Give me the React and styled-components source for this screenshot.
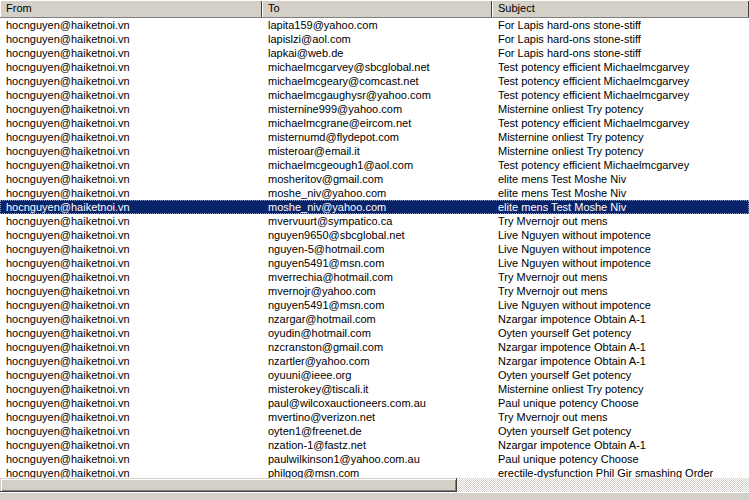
import React from "react";
import styled, { createGlobalStyle } from "styled-components";

const FACE = "#d4d0c8";
const SHADOW = "#808080";
const DARK = "#404040";
const SELECTED = "#0a246a";
const COLUMNS = "262px 230px 1fr";

const GlobalStyle = createGlobalStyle`
  html, body {
    margin: 0;
    padding: 0;
    background: ${FACE};
  }
`;

const FROM = "hocnguyen@haiketnoi.vn";

const MESSAGES = [
  ["lapita159@yahoo.com", "For Lapis hard-ons stone-stiff"],
  ["lapislzi@aol.com", "For Lapis hard-ons stone-stiff"],
  ["lapkai@web.de", "For Lapis hard-ons stone-stiff"],
  ["michaelmcgarvey@sbcglobal.net", "Test potency efficient Michaelmcgarvey"],
  ["michaelmcgeary@comcast.net", "Test potency efficient Michaelmcgarvey"],
  ["michaelmcgaughysr@yahoo.com", "Test potency efficient Michaelmcgarvey"],
  ["misternine999@yahoo.com", "Misternine onliest Try potency"],
  ["michaelmcgrane@eircom.net", "Test potency efficient Michaelmcgarvey"],
  ["misternumd@flydepot.com", "Misternine onliest Try potency"],
  ["misteroar@email.it", "Misternine onliest Try potency"],
  ["michaelmcgeough1@aol.com", "Test potency efficient Michaelmcgarvey"],
  ["mosheritov@gmail.com", "elite mens Test Moshe Niv"],
  ["moshe_niv@yahoo.com", "elite mens Test Moshe Niv"],
  ["moshe_niv@yahoo.com", "elite mens Test Moshe Niv"],
  ["mvervuurt@sympatico.ca", "Try Mvernojr out mens"],
  ["nguyen9650@sbcglobal.net", "Live Nguyen without impotence"],
  ["nguyen-5@hotmail.com", "Live Nguyen without impotence"],
  ["nguyen5491@msn.com", "Live Nguyen without impotence"],
  ["mverrechia@hotmail.com", "Try Mvernojr out mens"],
  ["mvernojr@yahoo.com", "Try Mvernojr out mens"],
  ["nguyen5491@msn.com", "Live Nguyen without impotence"],
  ["nzargar@hotmail.com", "Nzargar impotence Obtain A-1"],
  ["oyudin@hotmail.com", "Oyten yourself Get potency"],
  ["nzcranston@gmail.com", "Nzargar impotence Obtain A-1"],
  ["nzartler@yahoo.com", "Nzargar impotence Obtain A-1"],
  ["oyuuni@ieee.org", "Oyten yourself Get potency"],
  ["misterokey@tiscali.it", "Misternine onliest Try potency"],
  ["paul@wilcoxauctioneers.com.au", "Paul unique potency Choose"],
  ["mvertino@verizon.net", "Try Mvernojr out mens"],
  ["oyten1@freenet.de", "Oyten yourself Get potency"],
  ["nzation-1@fastz.net", "Nzargar impotence Obtain A-1"],
  ["paulwilkinson1@yahoo.com.au", "Paul unique potency Choose"],
  ["philgog@msn.com", "erectile-dysfunction Phil Gir smashing Order"],
];

const SELECTED_INDEX = 13;

const Window = styled.div`
  width: 749px;
  height: 500px;
  display: flex;
  flex-direction: column;
  overflow: hidden;
  background: ${FACE};
  font-family: "Liberation Sans", Arial, sans-serif;
  font-size: 11px;
  color: #000;
`;

const Header = styled.div`
  display: grid;
  grid-template-columns: ${COLUMNS};
  height: 17px;
  flex-shrink: 0;
  background: ${FACE};
  border-bottom: 1px solid ${SHADOW};
`;

const HeaderCell = styled.div`
  padding-left: 6px;
  line-height: 16px;
  white-space: nowrap;
  overflow: hidden;
  box-shadow: inset 1px 1px #fff, inset -1px 0 ${DARK};
`;

const List = styled.div`
  height: 460px;
  flex-shrink: 0;
  overflow: hidden;
  background: #fff;
`;

const Row = styled.div`
  position: relative;
  display: grid;
  grid-template-columns: ${COLUMNS};
  height: 14px;
  line-height: 14px;
  background: ${(p) => (p.$selected ? SELECTED : "transparent")};
  color: ${(p) => (p.$selected ? "#fff" : "#000")};

  &::after {
    content: "";
    display: ${(p) => (p.$selected ? "block" : "none")};
    position: absolute;
    inset: 0;
    border: 1px dotted #8a9bc9;
    pointer-events: none;
  }
`;

const Cell = styled.div`
  padding-left: 6px;
  white-space: nowrap;
  overflow: hidden;
`;

const HScroll = styled.div`
  display: flex;
  height: 14px;
  flex-shrink: 0;
  background-color: #fff;
  background-image: conic-gradient(${FACE} 25%, #fff 0 50%, ${FACE} 0 75%, #fff 0);
  background-size: 2px 2px;
`;

const Thumb = styled.div`
  width: 457px;
  box-sizing: border-box;
  background: ${FACE};
  border-right: 1px solid ${DARK};
  border-bottom: 1px solid ${DARK};
  box-shadow: inset 1px 1px ${FACE}, inset 2px 2px #fff, inset -1px -1px ${SHADOW};
`;

const StatusBar = styled.div`
  flex: 1;
  background: ${FACE};
  border-top: 1px solid #fff;
`;

export default function App() {
  return (
    <Window>
      <GlobalStyle />
      <Header>
        <HeaderCell>From</HeaderCell>
        <HeaderCell>To</HeaderCell>
        <HeaderCell>Subject</HeaderCell>
      </Header>
      <List>
        {MESSAGES.map(([to, subject], i) => (
          <Row key={i} $selected={i === SELECTED_INDEX}>
            <Cell>{FROM}</Cell>
            <Cell>{to}</Cell>
            <Cell>{subject}</Cell>
          </Row>
        ))}
      </List>
      <HScroll>
        <Thumb />
      </HScroll>
      <StatusBar />
    </Window>
  );
}
